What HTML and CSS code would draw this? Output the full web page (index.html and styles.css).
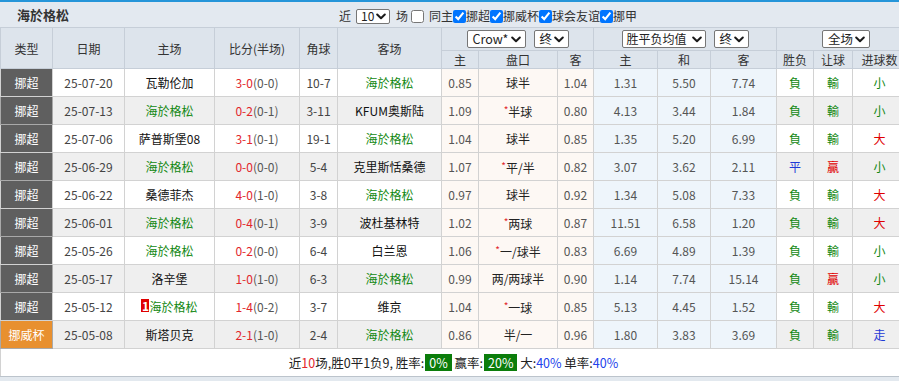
FILE: index.html
```html
<!DOCTYPE html>
<html lang="zh">
<head>
<meta charset="utf-8">
<link rel="stylesheet" href="styles.css">
</head>
<body>
<div class="bar">
  <div class="title">海於格松</div>
  <div class="filters">
    <span class="lbl">近</span>
    <span class="sel sel-n">10<svg class="chev" viewBox="0 0 10 7"><path d="M1.2 1.5 L5 5.3 L8.8 1.5"/></svg></span>
    <span class="lbl">场</span>
    <input type="checkbox" class="cb cb-first">
    <span class="lbl">同主</span><input type="checkbox" class="cb" checked><span class="lbl">挪超</span><input type="checkbox" class="cb" checked><span class="lbl">挪威杯</span><input type="checkbox" class="cb" checked><span class="lbl">球会友谊</span><input type="checkbox" class="cb" checked><span class="lbl">挪甲</span>
  </div>
</div>
<table class="tbl">
  <colgroup>
    <col style="width:52px"><col style="width:72px"><col style="width:90px"><col style="width:85px"><col style="width:38px"><col style="width:104px"><col style="width:37px"><col style="width:79px"><col style="width:36px"><col style="width:64px"><col style="width:53px"><col style="width:66px"><col style="width:37px"><col style="width:39px"><col style="width:54px">
  </colgroup>
  <thead>
    <tr class="h1">
      <th rowspan="2">类型</th>
      <th rowspan="2">日期</th>
      <th rowspan="2">主场</th>
      <th rowspan="2">比分(半场)</th>
      <th rowspan="2">角球</th>
      <th rowspan="2">客场</th>
      <th colspan="3"><div class="selgrp"><span class="sel sel-crow">Crow*<svg class="chev" viewBox="0 0 10 7"><path d="M1.2 1.5 L5 5.3 L8.8 1.5"/></svg></span><span class="sel sel-z">终<svg class="chev" viewBox="0 0 10 7"><path d="M1.2 1.5 L5 5.3 L8.8 1.5"/></svg></span></div></th>
      <th colspan="3"><div class="selgrp"><span class="sel sel-avg">胜平负均值<svg class="chev" viewBox="0 0 10 7"><path d="M1.2 1.5 L5 5.3 L8.8 1.5"/></svg></span><span class="sel sel-z">终<svg class="chev" viewBox="0 0 10 7"><path d="M1.2 1.5 L5 5.3 L8.8 1.5"/></svg></span></div></th>
      <th colspan="3"><div class="selgrp"><span class="sel sel-all">全场<svg class="chev" viewBox="0 0 10 7"><path d="M1.2 1.5 L5 5.3 L8.8 1.5"/></svg></span></div></th>
    </tr>
    <tr class="h2">
      <th>主</th><th>盘口</th><th>客</th><th>主</th><th>和</th><th>客</th><th>胜负</th><th>让球</th><th>进球数</th>
    </tr>
  </thead>
  <tbody>
    <tr class="odd">
      <td class="lg">挪超</td><td class="dt">25-07-20</td><td class="tm">瓦勒伦加</td><td class="sc"><span class="r">3-0</span>(0-0)</td><td class="dt">10-7</td><td class="tm g">海於格松</td>
      <td class="o1">0.85</td><td class="o1 hc">球半</td><td class="o1">1.04</td><td class="o2">1.31</td><td class="o2">5.50</td><td class="o2">7.74</td><td class="res g">負</td><td class="res g">輸</td><td class="res g">小</td>
    </tr>
    <tr class="even">
      <td class="lg">挪超</td><td class="dt">25-07-13</td><td class="tm g">海於格松</td><td class="sc"><span class="r">0-2</span>(0-1)</td><td class="dt">3-11</td><td class="tm">KFUM奥斯陆</td>
      <td class="o1">1.09</td><td class="o1 hc"><span class="st">*</span>半球</td><td class="o1">0.80</td><td class="o2">4.13</td><td class="o2">3.44</td><td class="o2">1.84</td><td class="res g">負</td><td class="res g">輸</td><td class="res g">小</td>
    </tr>
    <tr class="odd">
      <td class="lg">挪超</td><td class="dt">25-07-06</td><td class="tm">萨普斯堡08</td><td class="sc"><span class="r">3-1</span>(0-1)</td><td class="dt">19-1</td><td class="tm g">海於格松</td>
      <td class="o1">1.04</td><td class="o1 hc">球半</td><td class="o1">0.85</td><td class="o2">1.35</td><td class="o2">5.20</td><td class="o2">6.99</td><td class="res g">負</td><td class="res g">輸</td><td class="res rd">大</td>
    </tr>
    <tr class="even">
      <td class="lg">挪超</td><td class="dt">25-06-29</td><td class="tm g">海於格松</td><td class="sc"><span class="r">0-0</span>(0-0)</td><td class="dt">5-4</td><td class="tm">克里斯恬桑德</td>
      <td class="o1">1.07</td><td class="o1 hc"><span class="st">*</span>平/半</td><td class="o1">0.82</td><td class="o2">3.07</td><td class="o2">3.62</td><td class="o2">2.11</td><td class="res b">平</td><td class="res rd">贏</td><td class="res g">小</td>
    </tr>
    <tr class="odd">
      <td class="lg">挪超</td><td class="dt">25-06-22</td><td class="tm">桑德菲杰</td><td class="sc"><span class="r">4-0</span>(1-0)</td><td class="dt">3-8</td><td class="tm g">海於格松</td>
      <td class="o1">0.97</td><td class="o1 hc">球半</td><td class="o1">0.92</td><td class="o2">1.34</td><td class="o2">5.08</td><td class="o2">7.33</td><td class="res g">負</td><td class="res g">輸</td><td class="res rd">大</td>
    </tr>
    <tr class="even">
      <td class="lg">挪超</td><td class="dt">25-06-01</td><td class="tm g">海於格松</td><td class="sc"><span class="r">0-4</span>(0-1)</td><td class="dt">3-9</td><td class="tm">波杜基林特</td>
      <td class="o1">1.02</td><td class="o1 hc"><span class="st">*</span>两球</td><td class="o1">0.87</td><td class="o2">11.51</td><td class="o2">6.58</td><td class="o2">1.20</td><td class="res g">負</td><td class="res g">輸</td><td class="res rd">大</td>
    </tr>
    <tr class="odd">
      <td class="lg">挪超</td><td class="dt">25-05-26</td><td class="tm g">海於格松</td><td class="sc"><span class="r">0-2</span>(0-0)</td><td class="dt">6-4</td><td class="tm">白兰恩</td>
      <td class="o1">1.06</td><td class="o1 hc"><span class="st">*</span>一/球半</td><td class="o1">0.83</td><td class="o2">6.69</td><td class="o2">4.89</td><td class="o2">1.39</td><td class="res g">負</td><td class="res g">輸</td><td class="res g">小</td>
    </tr>
    <tr class="even">
      <td class="lg">挪超</td><td class="dt">25-05-17</td><td class="tm">洛辛堡</td><td class="sc"><span class="r">1-0</span>(1-0)</td><td class="dt">6-3</td><td class="tm g">海於格松</td>
      <td class="o1">0.99</td><td class="o1 hc">两/两球半</td><td class="o1">0.90</td><td class="o2">1.14</td><td class="o2">7.74</td><td class="o2">15.14</td><td class="res g">負</td><td class="res rd">贏</td><td class="res g">小</td>
    </tr>
    <tr class="odd">
      <td class="lg">挪超</td><td class="dt">25-05-12</td><td class="tm g"><span class="card">1</span>海於格松</td><td class="sc"><span class="r">1-4</span>(0-2)</td><td class="dt">3-7</td><td class="tm">维京</td>
      <td class="o1">1.04</td><td class="o1 hc"><span class="st">*</span>一球</td><td class="o1">0.85</td><td class="o2">5.13</td><td class="o2">4.45</td><td class="o2">1.52</td><td class="res g">負</td><td class="res g">輸</td><td class="res rd">大</td>
    </tr>
    <tr class="even">
      <td class="lg cup">挪威杯</td><td class="dt">25-05-08</td><td class="tm">斯塔贝克</td><td class="sc"><span class="r">2-1</span>(1-0)</td><td class="dt">2-4</td><td class="tm g">海於格松</td>
      <td class="o1">0.86</td><td class="o1 hc">半/一</td><td class="o1">0.96</td><td class="o2">1.80</td><td class="o2">3.83</td><td class="o2">3.69</td><td class="res g">負</td><td class="res g">輸</td><td class="res b">走</td>
    </tr>
    <tr class="foot">
      <td colspan="15">近<span class="r">10</span>场,胜0平1负9, 胜率:<span class="pill">0%</span> 赢率:<span class="pill">20%</span> 大:<span class="bl">40%</span> 单率:<span class="bl">40%</span></td>
    </tr>
  </tbody>
</table>
<div class="below"></div>
</body>
</html>
```
FILE: styles.css
```css
html, body {
  margin: 0;
  padding: 0;
}
body {
  width: 906px;
  overflow: hidden;
  background: #e3e9ef;
  font-family: "Noto Sans CJK SC", "Noto Sans", sans-serif;
  font-size: 12px;
  color: #222;
}
.bar {
  border-top: 2px solid #2595d9;
  background: #e3e9f0;
  height: 25px;
  display: flex;
  align-items: center;
}
.title {
  box-sizing: border-box;
  width: 339px;
  padding-left: 17px;
  font-weight: bold;
  font-size: 13px;
  color: #333;
}
.filters {
  display: flex;
  align-items: center;
  font-size: 12px;
  color: #333;
  padding-top: 3px;
}
.filters .lbl { line-height: 14px; }
.sel {
  display: inline-flex;
  align-items: center;
  justify-content: space-between;
  box-sizing: border-box;
  height: 18px;
  border: 1px solid #767676;
  border-radius: 2px;
  background: #fff;
  padding: 0 4px 0 5px;
  font-size: 12.5px;
  color: #222;
  line-height: 16px;
  white-space: nowrap;
}
.chev {
  width: 10px;
  height: 7px;
  flex: none;
}
.chev path {
  fill: none;
  stroke: #1a1a1a;
  stroke-width: 2;
  stroke-linecap: round;
  stroke-linejoin: round;
}
.sel-n {
  width: 34px;
  height: 15px;
  margin: 0 6px 0 5px;
  font-size: 12px;
  padding: 0 3px 0 4px;
}
.cb {
  width: 13px;
  height: 13px;
  margin: 0;
  accent-color: #0075ff;
}
.cb-first { margin: 0 5px 0 3px; }
.tbl {
  border-collapse: collapse;
  table-layout: fixed;
  width: 906px;
  background: #fff;
}
.tbl th {
  background: #dde4ec;
  color: #333;
  font-weight: normal;
  border: 1px solid #c6ced8;
  padding: 0;
  text-align: center;
  font-size: 12px;
  white-space: nowrap;
}
.h1 { height: 23px; }
.h2 { height: 18px; }
.h2 th { line-height: 16px; }
.selgrp {
  display: flex;
  justify-content: center;
  gap: 8px;
  padding: 1px 0 1px;
}
.sel-crow { width: 59px; }
.sel-z { width: 35px; }
.sel-avg { width: 84px; padding: 0 3px 0 4px; font-size: 12px; }
.sel-all { width: 48px; margin-left: 9px; }
.tbl td {
  border: 1px solid #d2d2d2;
  padding: 0;
  text-align: center;
  white-space: nowrap;
  overflow: hidden;
}
.tbl tbody tr { height: 28px; }
.even td { background: #efefef; }
.lg, .even .lg {
  background: #5f5f5f;
  color: #fff;
  border-color: #a9a9a9;
}
.even .cup { background: #e8902f; }
.dt { color: #444; }
.tm { color: #111; }
.tm.g, .g { color: #118811; }
.sc { color: #555; }
.r { color: #e2262c; }
.o1, .even .o1 { background: #fdf8f4; color: #555; }
.o2, .even .o2 { background: #eef5fb; color: #555; }
.hc { color: #222; }
.o1.hc { color: #222; }
.st {
  color: #e2262c;
  font-size: 10px;
  vertical-align: 3px;
}
.rd { color: #e00000; }
.b { color: #1f3ad6; }
.card {
  display: inline-block;
  background: #e00000;
  color: #fff;
  font-weight: bold;
  font-size: 12px;
  line-height: 13px;
  width: 8px;
  text-align: center;
  vertical-align: 1px;
}
.foot td {
  background: #fff;
  height: 27px;
  color: #222;
  font-size: 12.5px;
  border-bottom: 1px solid #bcc4cc;
}
.pill {
  display: inline-block;
  background: #0b7d0b;
  color: #fff;
  padding: 0 4px;
  line-height: 17px;
  margin-left: 1px;
}
.bl { color: #2243ec; }
.below { height: 10px; }
```
